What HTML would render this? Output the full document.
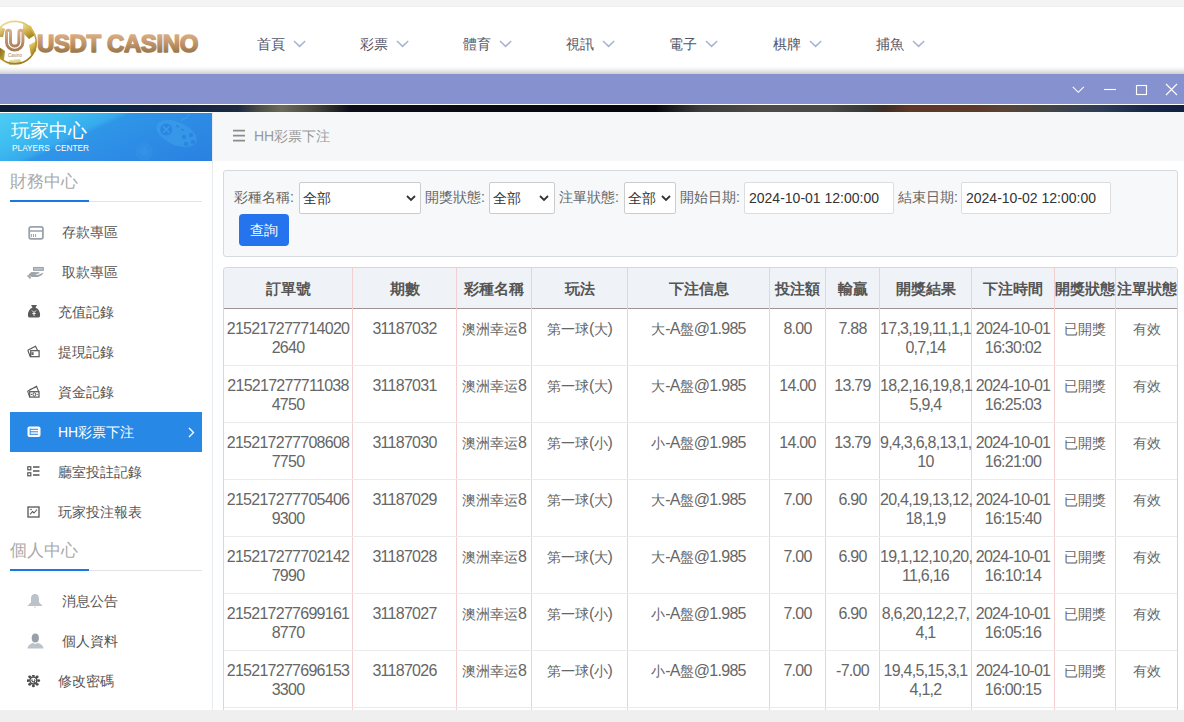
<!DOCTYPE html>
<html><head><meta charset="utf-8">
<style>
*{margin:0;padding:0;box-sizing:border-box}
html,body{width:1184px;height:722px;overflow:hidden}
body{background:#efefef;font-family:"Liberation Sans",sans-serif;position:relative;color:#555}
.abs{position:absolute}
#topstrip{left:0;top:0;width:1184px;height:7px;background:linear-gradient(#f3f3f3 0,#f3f3f3 6px,#ececec 7px)}
#header{left:0;top:7px;width:1184px;height:67px;background:linear-gradient(#fff 0,#fff 59.5px,#f6f6f6 61.5px,#e2e2e2 64.5px,#cfcfcb 67px)}
#purple{left:0;top:74px;width:1184px;height:30px;background:#8692cf}
#wline{left:0;top:104px;width:1184px;height:1px;background:#fff}
#dark{left:0;top:105px;width:1184px;height:7px;background:linear-gradient(90deg,#0d1e38 0,#03294a 80px,#142442 160px,#1c2a42 238px,#505248 262px,#6b6a5c 282px,#45453f 315px,#0c0f18 350px,#05070d 600px,#06080e 655px,#3c3c3c 700px,#4c4b48 760px,#4a4a48 830px,#353a38 865px,#3e2e26 885px,#5e3828 910px,#5c3a2a 975px,#584436 1005px,#454545 1045px,#2e3e58 1100px,#1a2848 1145px,#0f2040 1184px)}
#page{left:0;top:112px;width:1184px;height:598px;background:#fff}
#side{left:0;top:0;width:213px;height:598px;background:#fff;border-right:1px solid #e6ebf0}
#main{left:213px;top:0;width:971px;height:597px;background:#fff}

.nav{top:33px;height:20px;font-size:14px;line-height:20px;color:#555566;white-space:nowrap}
.nav svg{position:absolute;top:6px}

#sidehead{left:0;top:113px;width:212px;height:48px;background:linear-gradient(155deg,#4ccbf3 0%,#3fbff1 22%,#36aaed 38%,#2f96e7 42%,#2d8ce5 65%,#2a80e0 100%);overflow:hidden}
#sidehead .t1{position:absolute;left:11px;top:7px;font-size:19px;line-height:22px;color:#fff;white-space:nowrap}
#sidehead .t2{position:absolute;left:12px;top:30px;font-size:8.3px;line-height:10px;color:#fff;letter-spacing:0;word-spacing:3px;white-space:nowrap}
.stitle{left:10px;font-size:17px;line-height:22px;color:#aaa;white-space:nowrap}
.sline{left:10px;width:192px;height:1px;background:#e3e3e3}
.sline i{position:absolute;left:0;top:-1px;width:79px;height:2px;background:#1a78e0}
.item{left:10px;width:192px;height:40px;font-size:14px;line-height:40px;color:#555;white-space:nowrap}
.item span{position:absolute;top:0}
.item svg{position:absolute}
.item.act{background:#2888e6;color:#fff}

#crumb{left:213px;top:112px;width:971px;height:49px;background:#f5f7f9}
#crumb .tx{position:absolute;left:41px;top:14px;font-size:14px;line-height:20px;color:#999;white-space:nowrap}
#filter{left:223px;top:170px;width:955px;height:87px;background:#f6f8fa;border:1px solid #d5dadf;border-radius:3px}
.lbl{font-size:14px;line-height:20px;color:#666;white-space:nowrap;top:187px}
.sel{top:182px;height:32px;background:#fff;border:1px solid #ccc;border-radius:2px;font-size:14px;line-height:30px;color:#333;padding-left:3px;white-space:nowrap}
.sel svg{position:absolute;top:12px}
.inp{top:182px;height:32px;background:#fff;border:1px solid #ddd;border-radius:2px;font-size:14px;line-height:30px;color:#333;padding-left:4px;white-space:nowrap}
#btn{left:239px;top:214px;width:50px;height:32px;background:#2673ee;border-radius:4px;color:#fff;font-size:14px;line-height:32px;text-align:center}
#tbl{left:223px;top:267px;width:955px;height:450px;border:1px solid #d4d8de;border-right-color:#f0c8ca;border-radius:4px 4px 0 0;overflow:hidden;background:#fff}
#thead{position:absolute;left:0;top:0;width:955px;height:41px;background:#eff3f7;border-bottom:1px solid #9e9494}
.vl{position:absolute;top:0;width:1px;height:450px;background:#f3cfd0}
.hl{position:absolute;left:0;width:955px;height:1px;background:#ebebeb}
.th{position:absolute;top:0;height:40px;line-height:41px;text-align:center;font-size:15px;font-weight:bold;color:#555;white-space:nowrap}
.td{position:absolute;text-align:center;font-size:16px;letter-spacing:-0.73px;line-height:19px;color:#666;white-space:nowrap}
#bottom{left:0;top:710px;width:1184px;height:12px;background:#efefef}
.td .c{font-size:14.2px;letter-spacing:0}
</style></head><body>
<div id="topstrip" class="abs"></div>
<div id="header" class="abs">
  <svg class="abs" style="left:0;top:13px" width="40" height="48" viewBox="0 0 40 48">
    <defs><linearGradient id="gold" x1="0.2" y1="0" x2="0.6" y2="1"><stop offset="0" stop-color="#ecdc9a"/><stop offset="0.45" stop-color="#d1b347"/><stop offset="1" stop-color="#9a7c1c"/></linearGradient>
    <linearGradient id="gold2" x1="0" y1="0" x2="1" y2="1"><stop offset="0" stop-color="#7a6414"/><stop offset="1" stop-color="#c9aa40"/></linearGradient>
    <linearGradient id="brn" x1="0" y1="0" x2="0" y2="1"><stop offset="0" stop-color="#d6ad85"/><stop offset="1" stop-color="#a87c55"/></linearGradient></defs>
    <circle cx="15" cy="22.6" r="21" fill="#fff"/>
    <path d="M23 3.5 L31 6 L35 15 L29 19 L23 13 Z" fill="url(#gold)"/>
    <path d="M29 25 L36.5 21 L36 31 L31 35 Z" fill="url(#gold)"/>
    <path d="M-1 27 L5 31 L4 40 L-1 39 Z" fill="url(#gold2)"/>
    <path d="M-1 6 L5 9 L3 17 L-1 17 Z" fill="url(#gold)" opacity="0.8"/>
    <path d="M9 40 L20 39 L22 44 L9 45 Z" fill="url(#gold)" opacity="0.6"/>
    
    <circle cx="15" cy="22.6" r="21.2" fill="none" stroke="url(#gold)" stroke-width="1.6"/>
    <path d="M8.5 12.2 V21.9 A6.2 6.2 0 0 0 20.9 21.9 V12.2" fill="none" stroke="url(#brn)" stroke-width="7" stroke-linecap="round"/>
    <path d="M8.5 12.2 V21.9 A6.2 6.2 0 0 0 20.9 21.9 V12.2" fill="none" stroke="#fff" stroke-width="1.1" stroke-linecap="round"/>
    <text x="15" y="37" font-size="4.5" fill="#a08060" text-anchor="middle" font-family="Liberation Sans" font-style="italic">Casino</text>
  </svg>
  <svg class="abs" style="left:30px;top:20px" width="180" height="40" viewBox="0 0 180 40"><defs><linearGradient id="lt" x1="0" y1="7" x2="0" y2="26" gradientUnits="userSpaceOnUse"><stop offset="0" stop-color="#dcb083"/><stop offset="0.5" stop-color="#c0936a"/><stop offset="1" stop-color="#987548"/></linearGradient></defs><text x="7" y="25" font-family="Liberation Sans" font-weight="bold" font-size="24" letter-spacing="-0.4" fill="url(#lt)" stroke="url(#lt)" stroke-width="1.5" stroke-linejoin="round">USDT CASINO</text></svg>
  <div class="nav abs" style="left:257px;top:27px">首頁<svg style="left:36px" width="13" height="8" viewBox="0 0 13 8"><path d="M1 1 L6.6 6.4 L12.2 1" fill="none" stroke="#a9b2d2" stroke-width="1.5"/></svg></div>
  <div class="nav abs" style="left:360px;top:27px">彩票<svg style="left:36px" width="13" height="8" viewBox="0 0 13 8"><path d="M1 1 L6.6 6.4 L12.2 1" fill="none" stroke="#a9b2d2" stroke-width="1.5"/></svg></div>
  <div class="nav abs" style="left:463px;top:27px">體育<svg style="left:36px" width="13" height="8" viewBox="0 0 13 8"><path d="M1 1 L6.6 6.4 L12.2 1" fill="none" stroke="#a9b2d2" stroke-width="1.5"/></svg></div>
  <div class="nav abs" style="left:566px;top:27px">視訊<svg style="left:36px" width="13" height="8" viewBox="0 0 13 8"><path d="M1 1 L6.6 6.4 L12.2 1" fill="none" stroke="#a9b2d2" stroke-width="1.5"/></svg></div>
  <div class="nav abs" style="left:669px;top:27px">電子<svg style="left:36px" width="13" height="8" viewBox="0 0 13 8"><path d="M1 1 L6.6 6.4 L12.2 1" fill="none" stroke="#a9b2d2" stroke-width="1.5"/></svg></div>
  <div class="nav abs" style="left:773px;top:27px">棋牌<svg style="left:36px" width="13" height="8" viewBox="0 0 13 8"><path d="M1 1 L6.6 6.4 L12.2 1" fill="none" stroke="#a9b2d2" stroke-width="1.5"/></svg></div>
  <div class="nav abs" style="left:876px;top:27px">捕魚<svg style="left:36px" width="13" height="8" viewBox="0 0 13 8"><path d="M1 1 L6.6 6.4 L12.2 1" fill="none" stroke="#a9b2d2" stroke-width="1.5"/></svg></div>
  
</div>
<div id="purple" class="abs">
  <svg class="abs" style="left:1060px;top:0" width="124" height="30" viewBox="0 0 124 30">
    <path d="M12.8 12.8 L18.3 18.3 L23.8 12.8" fill="none" stroke="#fff" stroke-width="1.1"/>
    <path d="M44 15.5 H56" stroke="#fff" stroke-width="1.1"/>
    <rect x="76.5" y="11.5" width="10" height="9" fill="none" stroke="#fff" stroke-width="1.1"/>
    <path d="M106 10 L117 21 M117 10 L106 21" stroke="#fff" stroke-width="1.1"/>
  </svg>
</div>
<div id="wline" class="abs"></div>
<div id="dark" class="abs"></div>
<div id="page" class="abs">
  <div id="side" class="abs"></div>
  <div id="main" class="abs"></div>
</div>
<div id="sidehead" class="abs">
  <svg class="abs" style="left:0;top:0" width="212" height="47" viewBox="0 0 212 47">
    <ellipse cx="176.5" cy="20.5" rx="21.5" ry="11.5" transform="rotate(24 176.5 20.5)" fill="#40a4ec" opacity="0.5"/>
    <circle cx="166.2" cy="16.4" r="6" fill="#2b86e2"/>
    <path d="M163 13.2 L169.4 19.6 M169.4 13.2 L163 19.6" stroke="#3a9ae8" stroke-width="1.6"/>
    <path d="M176 12.5 L179 14 M181 16 L184 17.5" stroke="#2b86e2" stroke-width="1.6"/>
    <g fill="#2b86e2"><circle cx="184" cy="24" r="2.2"/><circle cx="191" cy="22" r="2.2"/><circle cx="186" cy="31" r="2.2"/><circle cx="193" cy="29" r="2.2"/></g>
    <path d="M181 8 C183 4 186 7 188 3 L189 1" fill="none" stroke="#48aaee" stroke-width="0.9" opacity="0.7"/>
    <circle cx="144" cy="38.6" r="9" fill="#3ea0ea" opacity="0.22"/>
    <circle cx="144" cy="38.6" r="4.5" fill="#44a6ec" opacity="0.2"/>
  </svg>
  <div class="t1">玩家中心</div>
  <div class="t2">PLAYERS CENTER</div>
</div>
<div class="stitle abs" style="top:171px">財務中心</div>
<div class="sline abs" style="top:201px"><i></i></div>
<div class="item abs" style="top:212px"><svg style="left:17px;top:13px" width="17" height="15" viewBox="0 0 17 15"><rect x="2.2" y="1.9" width="13.7" height="12" rx="1.8" fill="none" stroke="#99a2ab" stroke-width="1.8"/><path d="M2.2 6 H15.9" stroke="#99a2ab" stroke-width="1.5"/><path d="M4.4 9 V12 M6.5 9 V12 M8.6 9 V12" stroke="#99a2ab" stroke-width="1"/></svg><span style="left:52px">存款專區</span></div>
<div class="item abs" style="top:252px"><svg style="left:17px;top:14px" width="19" height="14" viewBox="0 0 19 14"><rect x="6.6" y="1.5" width="9.7" height="2.8" fill="#bcc3ca" stroke="#9ca4ac" stroke-width="1.1"/><path d="M2 8 L4.5 6 L12.5 6.2 L12 7.5 L8 8.5 L11 9 L16.5 6.5 L15 9 L11 11 L5 11 L2 10 Z" fill="#9ca4ac"/><path d="M0.6 9.4 L3.6 12.4" stroke="#9ca4ac" stroke-width="1.6"/></svg><span style="left:52px">取款專區</span></div>
<div class="item abs" style="top:292px"><svg style="left:17px;top:12px" width="14" height="14" viewBox="0 0 14 14"><path d="M4 1 H10 L8.5 3.5 C12 5 13.5 9 13 12 C12.8 13 12 13.5 11 13.5 H3 C2 13.5 1.2 13 1 12 C0.5 9 2 5 5.5 3.5 Z" fill="#5a5a5a"/><path d="M5 6.5 L7 8.5 L9 6.5 M7 8.5 V12 M5.3 9.5 H8.7" stroke="#fff" stroke-width="0.9" fill="none"/></svg><span style="left:48px">充值記錄</span></div>
<div class="item abs" style="top:332px"><svg style="left:17px;top:12px" width="14" height="14" viewBox="0 0 14 14"><path d="M0.8 6.2 L8.5 2.2 L10.6 6.4" fill="none" stroke="#555" stroke-width="1.1"/><path d="M0.8 6.2 L3.4 13" fill="none" stroke="#555" stroke-width="1.1"/><rect x="3.7" y="6.7" width="8.4" height="6" fill="none" stroke="#555" stroke-width="1.2"/><rect x="4.4" y="8.2" width="2.2" height="2.8" fill="#666"/></svg><span style="left:48px">提現記錄</span></div>
<div class="item abs" style="top:372px"><svg style="left:17px;top:12px" width="14" height="14" viewBox="0 0 14 14"><path d="M0.6 7.2 L9.5 2.2 L11.6 7.4 M2.5 5.8 L9 3" fill="none" stroke="#555" stroke-width="1.1"/><path d="M0.6 7.2 L2.6 13" fill="none" stroke="#555" stroke-width="1"/><rect x="2.7" y="7.7" width="9.3" height="5.4" fill="none" stroke="#555" stroke-width="1.2"/><ellipse cx="7.3" cy="10.4" rx="1.3" ry="1.8" fill="none" stroke="#555" stroke-width="1"/><circle cx="4.6" cy="10.4" r="0.6" fill="#555"/><circle cx="10.1" cy="10.4" r="0.6" fill="#555"/></svg><span style="left:48px">資金記錄</span></div>
<div class="item abs act" style="top:412px"><svg style="left:17px;top:14px" width="14" height="12" viewBox="0 0 14 12"><rect x="0.5" y="0.5" width="13" height="10.5" rx="2" fill="#fff"/><path d="M3.2 3.3 H11 M3.2 5.8 H11 M3.2 8.3 H11" stroke="#2888e6" stroke-width="1"/><path d="M3.2 2.5 V9" stroke="#2888e6" stroke-width="1"/></svg><span style="left:48px">HH彩票下注</span><svg style="left:178px;top:15px" width="7" height="11" viewBox="0 0 7 11"><path d="M1 1 L5.5 5.5 L1 10" fill="none" stroke="#fff" stroke-width="1.4"/></svg></div>
<div class="item abs" style="top:452px"><svg style="left:17px;top:14px" width="13" height="11" viewBox="0 0 13 11"><rect x="0.8" y="0.8" width="3" height="3" fill="none" stroke="#555" stroke-width="1.2"/><rect x="0.8" y="6.8" width="3" height="3" fill="none" stroke="#555" stroke-width="1.2"/><path d="M6 1 H12.5 M6 5 H12.5 M6 9 H12.5" stroke="#555" stroke-width="1.3"/></svg><span style="left:48px">廳室投註記錄</span></div>
<div class="item abs" style="top:492px"><svg style="left:17px;top:14px" width="13" height="12" viewBox="0 0 13 12"><rect x="1" y="1" width="11" height="10" fill="none" stroke="#555" stroke-width="1.3"/><path d="M3 8.5 L5.5 5.5 L7 7 L10 3.5" fill="none" stroke="#555" stroke-width="1.1"/><circle cx="4" cy="3.5" r="0.8" fill="#555"/></svg><span style="left:48px">玩家投注報表</span></div>
<div class="stitle abs" style="top:540px">個人中心</div>
<div class="sline abs" style="top:570px"><i></i></div>
<div class="item abs" style="top:581px"><svg style="left:17px;top:12px" width="16" height="16" viewBox="0 0 16 16"><path d="M8 1 C5.2 1 4 3.3 4 6 V9.3 L0.3 13 H15.7 L12 9.3 V6 C12 3.3 10.8 1 8 1 Z" fill="#bcc2ca"/><path d="M6.8 13.8 H9.2 L8 15 Z" fill="#bcc2ca"/></svg><span style="left:52px">消息公告</span></div>
<div class="item abs" style="top:621px"><svg style="left:17px;top:12px" width="17" height="16" viewBox="0 0 17 16"><ellipse cx="8.3" cy="5" rx="3.6" ry="4.5" fill="#98a0aa"/><path d="M0.5 15.5 C1 12 4 10.5 6 10 L8.3 11 L10.6 10 C13 10.5 16 12 16.5 15.5 Z" fill="#bcc2ca"/></svg><span style="left:52px">個人資料</span></div>
<div class="item abs" style="top:661px"><svg style="left:17px;top:14px" width="14" height="13" viewBox="0 0 14 13"><g fill="#4a4a4a"><circle cx="11.70" cy="5.60" r="1.45"/><circle cx="10.15" cy="9.35" r="1.45"/><circle cx="6.40" cy="10.90" r="1.45"/><circle cx="2.65" cy="9.35" r="1.45"/><circle cx="1.10" cy="5.60" r="1.45"/><circle cx="2.65" cy="1.85" r="1.45"/><circle cx="6.40" cy="0.30" r="1.45"/><circle cx="10.15" cy="1.85" r="1.45"/></g><circle cx="6.4" cy="5.6" r="3.5" fill="#fff" stroke="#4a4a4a" stroke-width="1.5"/><path d="M5.3 4.3 A1.5 1.5 0 1 0 7.5 4.3 M6.9 6.5 L8.7 8.6" fill="none" stroke="#4a4a4a" stroke-width="1.1"/></svg><span style="left:48px">修改密碼</span></div>

<div id="crumb" class="abs"><svg style="position:absolute;left:20px;top:17px" width="12" height="13" viewBox="0 0 12 13"><path d="M0 1.6 H12 M0 6.6 H12 M0 11.6 H12" stroke="#8c8c8c" stroke-width="1.8"/></svg><div class="tx">HH彩票下注</div></div>
<div id="filter" class="abs"></div>
<div class="lbl abs" style="left:234px">彩種名稱:</div>
<div class="sel abs" style="left:299px;width:122px">全部<svg style="left:106px" width="10" height="7" viewBox="0 0 10 7"><path d="M1 1 L5 5 L9 1" fill="none" stroke="#333" stroke-width="1.8"/></svg></div>
<div class="lbl abs" style="left:425px">開獎狀態:</div>
<div class="sel abs" style="left:489px;width:66px">全部<svg style="left:49px" width="10" height="7" viewBox="0 0 10 7"><path d="M1 1 L5 5 L9 1" fill="none" stroke="#333" stroke-width="1.8"/></svg></div>
<div class="lbl abs" style="left:559px">注單狀態:</div>
<div class="sel abs" style="left:624px;width:52px">全部<svg style="left:36px" width="10" height="7" viewBox="0 0 10 7"><path d="M1 1 L5 5 L9 1" fill="none" stroke="#333" stroke-width="1.8"/></svg></div>
<div class="lbl abs" style="left:680px">開始日期:</div>
<div class="inp abs" style="left:744px;width:150px">2024-10-01 12:00:00</div>
<div class="lbl abs" style="left:898px">結束日期:</div>
<div class="inp abs" style="left:961px;width:150px">2024-10-02 12:00:00</div>
<div id="btn" class="abs">查詢</div>
<div id="tbl" class="abs"><div id="thead"></div>
<div class="vl" style="left:128px"></div><div class="vl" style="left:232px"></div><div class="vl" style="left:307px"></div><div class="vl" style="left:403px"></div><div class="vl" style="left:545px"></div><div class="vl" style="left:601px"></div><div class="vl" style="left:655px"></div><div class="vl" style="left:747px"></div><div class="vl" style="left:830px"></div><div class="vl" style="left:891px"></div><div class="hl" style="top:97px"></div><div class="hl" style="top:154px"></div><div class="hl" style="top:211px"></div><div class="hl" style="top:268px"></div><div class="hl" style="top:325px"></div><div class="hl" style="top:382px"></div><div class="hl" style="top:439px"></div>
<div class="th" style="left:0px;width:128px">訂單號</div><div class="th" style="left:129px;width:103px">期數</div><div class="th" style="left:233px;width:74px">彩種名稱</div><div class="th" style="left:308px;width:95px">玩法</div><div class="th" style="left:404px;width:141px">下注信息</div><div class="th" style="left:546px;width:55px">投注額</div><div class="th" style="left:602px;width:53px">輸贏</div><div class="th" style="left:656px;width:91px">開獎結果</div><div class="th" style="left:748px;width:82px">下注時間</div><div class="th" style="left:831px;width:60px">開獎狀態</div><div class="th" style="left:892px;width:61px">注單狀態</div>
<div class="td" style="left:0px;width:128px;top:50.5px">215217277714020<br>2640</div><div class="td" style="left:129px;width:103px;top:50.5px">31187032</div><div class="td" style="left:233px;width:74px;top:50.5px"><span class="c">澳洲幸运</span>8</div><div class="td" style="left:308px;width:95px;top:50.5px"><span class="c">第一球</span>(<span class="c">大</span>)</div><div class="td" style="left:404px;width:141px;top:50.5px"><span class="c">大</span>-A<span class="c">盤</span>@1.985</div><div class="td" style="left:546px;width:55px;top:50.5px">8.00</div><div class="td" style="left:602px;width:53px;top:50.5px">7.88</div><div class="td" style="left:656px;width:91px;top:50.5px">17,3,19,11,1,1<br>0,7,14</div><div class="td" style="left:748px;width:82px;top:50.5px">2024-10-01<br>16:30:02</div><div class="td" style="left:831px;width:60px;top:50.5px"><span class="c">已開獎</span></div><div class="td" style="left:892px;width:61px;top:50.5px"><span class="c">有效</span></div>
<div class="td" style="left:0px;width:128px;top:107.5px">215217277711038<br>4750</div><div class="td" style="left:129px;width:103px;top:107.5px">31187031</div><div class="td" style="left:233px;width:74px;top:107.5px"><span class="c">澳洲幸运</span>8</div><div class="td" style="left:308px;width:95px;top:107.5px"><span class="c">第一球</span>(<span class="c">大</span>)</div><div class="td" style="left:404px;width:141px;top:107.5px"><span class="c">大</span>-A<span class="c">盤</span>@1.985</div><div class="td" style="left:546px;width:55px;top:107.5px">14.00</div><div class="td" style="left:602px;width:53px;top:107.5px">13.79</div><div class="td" style="left:656px;width:91px;top:107.5px">18,2,16,19,8,1<br>5,9,4</div><div class="td" style="left:748px;width:82px;top:107.5px">2024-10-01<br>16:25:03</div><div class="td" style="left:831px;width:60px;top:107.5px"><span class="c">已開獎</span></div><div class="td" style="left:892px;width:61px;top:107.5px"><span class="c">有效</span></div>
<div class="td" style="left:0px;width:128px;top:164.5px">215217277708608<br>7750</div><div class="td" style="left:129px;width:103px;top:164.5px">31187030</div><div class="td" style="left:233px;width:74px;top:164.5px"><span class="c">澳洲幸运</span>8</div><div class="td" style="left:308px;width:95px;top:164.5px"><span class="c">第一球</span>(<span class="c">小</span>)</div><div class="td" style="left:404px;width:141px;top:164.5px"><span class="c">小</span>-A<span class="c">盤</span>@1.985</div><div class="td" style="left:546px;width:55px;top:164.5px">14.00</div><div class="td" style="left:602px;width:53px;top:164.5px">13.79</div><div class="td" style="left:656px;width:91px;top:164.5px">9,4,3,6,8,13,1,<br>10</div><div class="td" style="left:748px;width:82px;top:164.5px">2024-10-01<br>16:21:00</div><div class="td" style="left:831px;width:60px;top:164.5px"><span class="c">已開獎</span></div><div class="td" style="left:892px;width:61px;top:164.5px"><span class="c">有效</span></div>
<div class="td" style="left:0px;width:128px;top:221.5px">215217277705406<br>9300</div><div class="td" style="left:129px;width:103px;top:221.5px">31187029</div><div class="td" style="left:233px;width:74px;top:221.5px"><span class="c">澳洲幸运</span>8</div><div class="td" style="left:308px;width:95px;top:221.5px"><span class="c">第一球</span>(<span class="c">大</span>)</div><div class="td" style="left:404px;width:141px;top:221.5px"><span class="c">大</span>-A<span class="c">盤</span>@1.985</div><div class="td" style="left:546px;width:55px;top:221.5px">7.00</div><div class="td" style="left:602px;width:53px;top:221.5px">6.90</div><div class="td" style="left:656px;width:91px;top:221.5px">20,4,19,13,12,<br>18,1,9</div><div class="td" style="left:748px;width:82px;top:221.5px">2024-10-01<br>16:15:40</div><div class="td" style="left:831px;width:60px;top:221.5px"><span class="c">已開獎</span></div><div class="td" style="left:892px;width:61px;top:221.5px"><span class="c">有效</span></div>
<div class="td" style="left:0px;width:128px;top:278.5px">215217277702142<br>7990</div><div class="td" style="left:129px;width:103px;top:278.5px">31187028</div><div class="td" style="left:233px;width:74px;top:278.5px"><span class="c">澳洲幸运</span>8</div><div class="td" style="left:308px;width:95px;top:278.5px"><span class="c">第一球</span>(<span class="c">大</span>)</div><div class="td" style="left:404px;width:141px;top:278.5px"><span class="c">大</span>-A<span class="c">盤</span>@1.985</div><div class="td" style="left:546px;width:55px;top:278.5px">7.00</div><div class="td" style="left:602px;width:53px;top:278.5px">6.90</div><div class="td" style="left:656px;width:91px;top:278.5px">19,1,12,10,20,<br>11,6,16</div><div class="td" style="left:748px;width:82px;top:278.5px">2024-10-01<br>16:10:14</div><div class="td" style="left:831px;width:60px;top:278.5px"><span class="c">已開獎</span></div><div class="td" style="left:892px;width:61px;top:278.5px"><span class="c">有效</span></div>
<div class="td" style="left:0px;width:128px;top:335.5px">215217277699161<br>8770</div><div class="td" style="left:129px;width:103px;top:335.5px">31187027</div><div class="td" style="left:233px;width:74px;top:335.5px"><span class="c">澳洲幸运</span>8</div><div class="td" style="left:308px;width:95px;top:335.5px"><span class="c">第一球</span>(<span class="c">小</span>)</div><div class="td" style="left:404px;width:141px;top:335.5px"><span class="c">小</span>-A<span class="c">盤</span>@1.985</div><div class="td" style="left:546px;width:55px;top:335.5px">7.00</div><div class="td" style="left:602px;width:53px;top:335.5px">6.90</div><div class="td" style="left:656px;width:91px;top:335.5px">8,6,20,12,2,7,<br>4,1</div><div class="td" style="left:748px;width:82px;top:335.5px">2024-10-01<br>16:05:16</div><div class="td" style="left:831px;width:60px;top:335.5px"><span class="c">已開獎</span></div><div class="td" style="left:892px;width:61px;top:335.5px"><span class="c">有效</span></div>
<div class="td" style="left:0px;width:128px;top:392.5px">215217277696153<br>3300</div><div class="td" style="left:129px;width:103px;top:392.5px">31187026</div><div class="td" style="left:233px;width:74px;top:392.5px"><span class="c">澳洲幸运</span>8</div><div class="td" style="left:308px;width:95px;top:392.5px"><span class="c">第一球</span>(<span class="c">小</span>)</div><div class="td" style="left:404px;width:141px;top:392.5px"><span class="c">小</span>-A<span class="c">盤</span>@1.985</div><div class="td" style="left:546px;width:55px;top:392.5px">7.00</div><div class="td" style="left:602px;width:53px;top:392.5px">-7.00</div><div class="td" style="left:656px;width:91px;top:392.5px">19,4,5,15,3,1<br>4,1,2</div><div class="td" style="left:748px;width:82px;top:392.5px">2024-10-01<br>16:00:15</div><div class="td" style="left:831px;width:60px;top:392.5px"><span class="c">已開獎</span></div><div class="td" style="left:892px;width:61px;top:392.5px"><span class="c">有效</span></div>
<div class="td" style="left:0px;width:128px;top:449.5px">215217277693153<br>3300</div><div class="td" style="left:129px;width:103px;top:449.5px">31187025</div><div class="td" style="left:233px;width:74px;top:449.5px"><span class="c">澳洲幸运</span>8</div><div class="td" style="left:308px;width:95px;top:449.5px"><span class="c">第一球</span>(<span class="c">小</span>)</div><div class="td" style="left:404px;width:141px;top:449.5px"><span class="c">小</span>-A<span class="c">盤</span>@1.985</div><div class="td" style="left:546px;width:55px;top:449.5px">7.00</div><div class="td" style="left:602px;width:53px;top:449.5px">6.90</div><div class="td" style="left:656px;width:91px;top:449.5px">1,2,3<br>4</div><div class="td" style="left:748px;width:82px;top:449.5px">2024-10-01<br>15:55:15</div><div class="td" style="left:831px;width:60px;top:449.5px"><span class="c">已開獎</span></div><div class="td" style="left:892px;width:61px;top:449.5px"><span class="c">有效</span></div>
</div>
<div class="abs" style="left:1177px;top:271px;width:1px;height:37px;background:#d4d8de"></div>
<div id="bottom" class="abs"></div>
</body></html>
